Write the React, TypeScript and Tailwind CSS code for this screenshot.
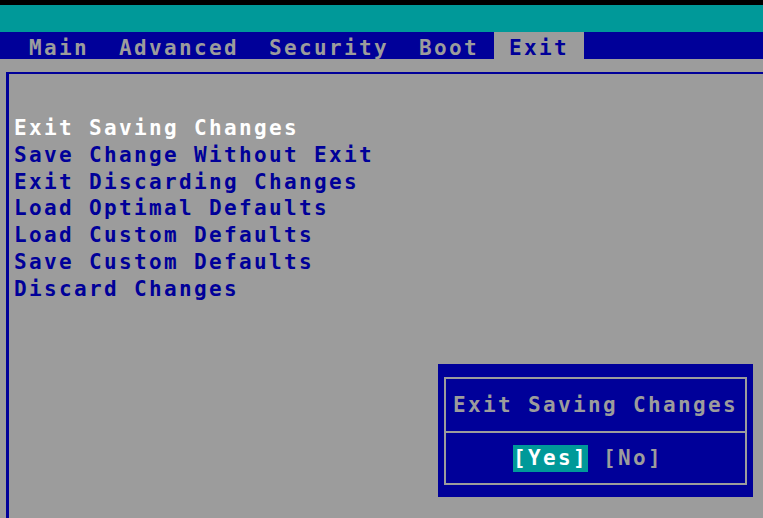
import React from 'react'

const tabs = ['Main', 'Advanced', 'Security', 'Boot', 'Exit']
const active = 'Exit'

const items = [
  'Exit Saving Changes',
  'Save Change Without Exit',
  'Exit Discarding Changes',
  'Load Optimal Defaults',
  'Load Custom Defaults',
  'Save Custom Defaults',
  'Discard Changes',
]

export default function App() {
  return (
    <div
      className="relative flex flex-col w-[763px] h-[518px] overflow-hidden bg-[#9c9c9c] text-[21px] font-bold tracking-[2.36px] whitespace-pre"
      style={{ fontFamily: '"DejaVu Sans Mono", "Liberation Mono", monospace' }}
    >
      <div className="h-[5px] shrink-0 bg-black" />
      <div className="h-[27px] shrink-0 bg-[#009999]" />

      {/* tab bar */}
      <div className="flex h-[27px] shrink-0 overflow-hidden bg-[#000099] pl-[14px]">
        {tabs.map((t) => (
          <div
            key={t}
            className={
              t === active
                ? 'h-full px-[15px] pt-[6px] leading-[21px] bg-[#9c9c9c] text-[#000099]'
                : 'h-full px-[15px] pt-[6px] leading-[21px] text-[#9c9c9c]'
            }
          >
            {t}
          </div>
        ))}
      </div>

      {/* main panel */}
      <div className="flex-1 pt-[13px]">
        <div className="h-full ml-[6px] border-l-[3px] border-t-[2px] border-[#000099] pl-[5px] pt-[41px]">
          {items.map((it, i) => (
            <div
              key={it}
              className={i === 0 ? 'leading-[26.8px] text-white' : 'leading-[26.8px] text-[#000099]'}
            >
              {it}
            </div>
          ))}
        </div>
      </div>

      {/* confirm dialog */}
      <div className="absolute left-[438px] top-[364px] w-[315px] h-[133px] bg-[#000099] pt-[13px] px-[6px] pb-[12px]">
        <div className="flex flex-col h-full border-2 border-[#9c9c9c]">
          <div className="flex h-[52px] items-center justify-center leading-[26.8px] text-[#9c9c9c]">
            Exit Saving Changes
          </div>
          <div className="flex flex-1 items-center border-t-2 border-[#9c9c9c] pl-[67px]">
            <span className="h-[27px] leading-[27px] bg-[#009999] text-white">[Yes]</span>
            <span className="leading-[27px] text-[#9c9c9c]"> [No]</span>
          </div>
        </div>
      </div>
    </div>
  )
}
